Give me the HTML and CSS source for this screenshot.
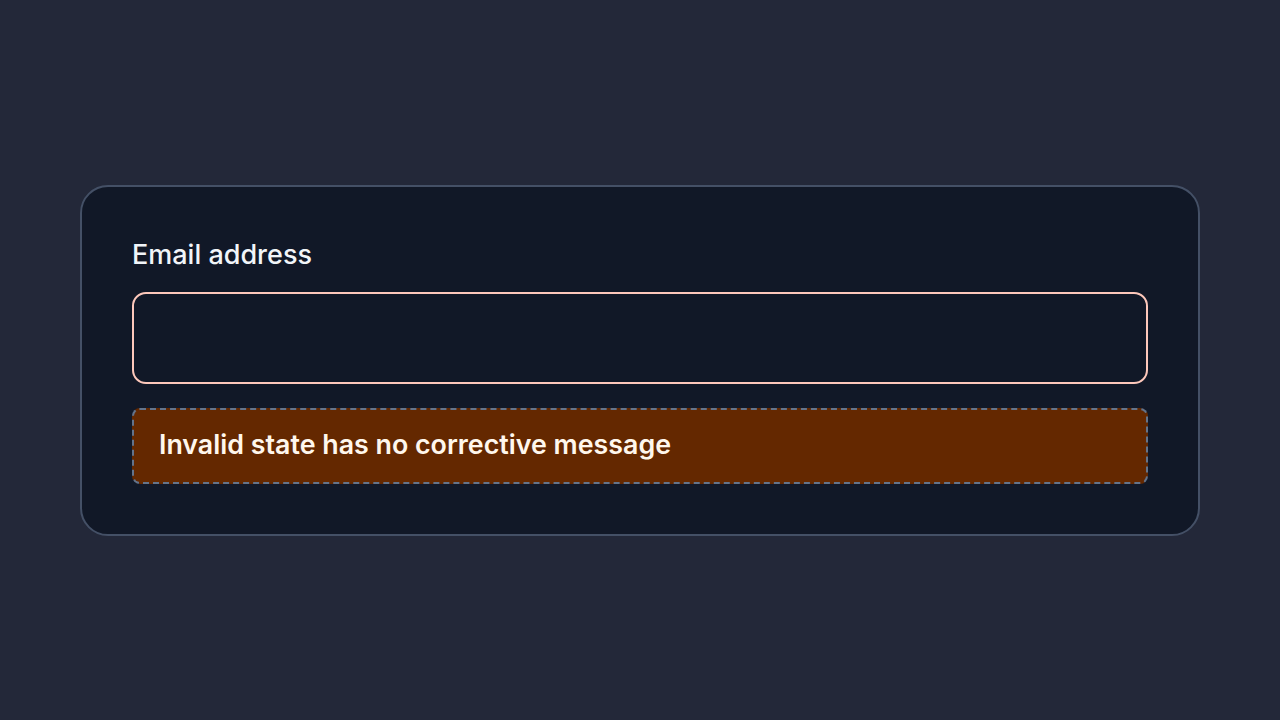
FILE: index.html
```html
<!DOCTYPE html>
<html lang="en">
<head>
<meta charset="utf-8">
<title>Email field</title>
<link rel="stylesheet" href="styles.css">
</head>
<body>
  <main class="page">
    <form class="card">
      <label class="field-label" for="email">Email address</label>
      <input class="field-input" id="email" type="email" aria-invalid="true">
      <div class="field-message">Invalid state has no corrective message</div>
    </form>
  </main>
</body>
</html>
```

FILE: styles.css
```css
* { box-sizing: border-box; }

html, body {
  margin: 0;
  height: 100%;
}

body {
  background: #232839;
  font-family: Inter, "Noto Sans", "Liberation Sans", sans-serif;
  color: #f1f5f9;
}

.page {
  height: 100%;
  display: flex;
  align-items: center;
  padding: 0 80px;
}

.card {
  width: 100%;
  display: flex;
  flex-direction: column;
  background: #111827;
  border: 2px solid #445066;
  border-radius: 28px;
  padding: 50px;
}

.field-label {
  font-size: 27px;
  font-weight: 500;
  line-height: 36px;
  margin-bottom: 19px;
  color: #f1f5f9;
}

.field-input {
  height: 92px;
  background: #111827;
  border: 2px solid #fdc8bb;
  border-radius: 14px;
  font: inherit;
  color: #f1f5f9;
  outline: none;
}

.field-message {
  margin-top: 24px;
  height: 76px;
  display: flex;
  align-items: center;
  padding: 0 25px 3px;
  background: #642800;
  border: 2px dashed #64748b;
  border-radius: 8px;
  font-size: 26.8px;
  font-weight: 600;
  color: #fff7ed;
}
```
